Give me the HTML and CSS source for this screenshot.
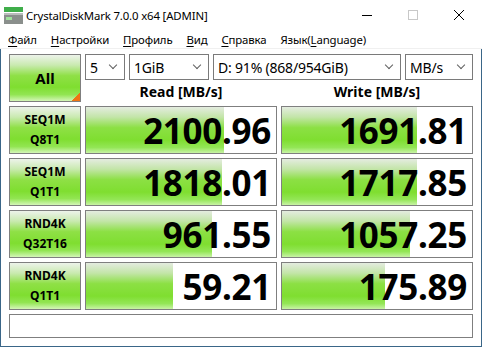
FILE: index.html
```html
<!DOCTYPE html>
<html lang="ru">
<head>
  <meta charset="UTF-8">
  <title>CrystalDiskMark 7.0.0 x64 [ADMIN]</title>
  <link rel="stylesheet" href="styles.css">
</head>
<body>

  <div class="titlebar">
    <svg class="app-icon" width="19" height="17" viewBox="0 0 19 17">
      <rect x="0" y="0" width="19" height="5" fill="#3fae4a"/>
      <rect x="0" y="6" width="19" height="11" fill="#8a8f8c"/>
      <rect x="0" y="6" width="19" height="2" fill="#b9bdbb"/>
      <rect x="2" y="10" width="6" height="3" fill="#9fe39c"/>
    </svg>
    <span class="title">CrystalDiskMark 7.0.0 x64 [ADMIN]</span>
    <div class="caption">
      <span class="cap-btn">
        <svg width="10" height="10" viewBox="0 0 10 10"><path d="M0 5.5H10" stroke="#000" stroke-width="1"/></svg>
      </span>
      <span class="cap-btn">
        <svg width="10" height="10" viewBox="0 0 10 10"><rect x="0.5" y="0.5" width="9" height="9" fill="none" stroke="#c8c8c8" stroke-width="1"/></svg>
      </span>
      <span class="cap-btn">
        <svg width="10" height="10" viewBox="0 0 10 10"><path d="M0 0L10 10M10 0L0 10" stroke="#000" stroke-width="1"/></svg>
      </span>
    </div>
  </div>

  <div class="menubar">
    <span class="menu"><u>Ф</u>айл</span>
    <span class="menu"><u>Н</u>астройки</span>
    <span class="menu"><u>П</u>рофиль</span>
    <span class="menu"><u>В</u>ид</span>
    <span class="menu"><u>С</u>правка</span>
    <span class="menu">Язык(<u>L</u>anguage)</span>
  </div>

  <div class="client">
    <div class="board">
      <div class="btn all">All</div>

      <div class="top">
        <div class="selects">
          <div class="select s-count"><span>5</span><i class="chev"></i></div>
          <div class="select s-size"><span>1GiB</span><i class="chev"></i></div>
          <div class="select s-drive"><span>D: 91% (868/954GiB)</span><i class="chev"></i></div>
          <div class="select s-unit"><span>MB/s</span><i class="chev"></i></div>
        </div>
        <div class="heads">
          <div>Read [MB/s]</div>
          <div>Write [MB/s]</div>
        </div>
      </div>

      <div class="btn label">SEQ1M<br>Q8T1</div>
      <div class="meter"><div class="bar" style="width:72.5%"></div><span class="val">2100.96</span></div>
      <div class="meter"><div class="bar" style="width:70.8%"></div><span class="val">1691.81</span></div>

      <div class="btn label">SEQ1M<br>Q1T1</div>
      <div class="meter"><div class="bar" style="width:71.5%"></div><span class="val">1818.01</span></div>
      <div class="meter"><div class="bar" style="width:70.8%"></div><span class="val">1717.85</span></div>

      <div class="btn label">RND4K<br>Q32T16</div>
      <div class="meter"><div class="bar" style="width:66.5%"></div><span class="val">961.55</span></div>
      <div class="meter"><div class="bar" style="width:67.2%"></div><span class="val">1057.25</span></div>

      <div class="btn label">RND4K<br>Q1T1</div>
      <div class="meter"><div class="bar" style="width:46%"></div><span class="val">59.21</span></div>
      <div class="meter"><div class="bar" style="width:54%"></div><span class="val">175.89</span></div>

      <div class="status"></div>
    </div>
  </div>

</body>
</html>
```

FILE: styles.css
```css
body {
  margin: 0;
  width: 482px;
  height: 347px;
  background: #fff;
  font-family: "Noto Sans", "Open Sans", sans-serif;
  color: #000;
  overflow: hidden;
}

/* title bar */
.titlebar {
  height: 30px;
  display: flex;
  align-items: center;
  background: #fff;
}

.app-icon {
  margin: 0 3px 0 4px;
}

.title {
  font-size: 11.4px;
  letter-spacing: -0.15px;
}

.caption {
  margin-left: auto;
  display: flex;
}

.cap-btn {
  width: 46px;
  height: 30px;
  display: flex;
  align-items: center;
  justify-content: center;
}

/* menu */
.menubar {
  height: 18px;
  display: flex;
  align-items: center;
  padding-left: 1px;
  font-size: 11.4px;
  letter-spacing: -0.15px;
  border-bottom: 1px solid #f0f0f0;
}

.menu {
  padding: 0 7px;
}

.menu u {
  text-decoration-thickness: 1px;
  text-underline-offset: 2px;
}

/* client area */
.client {
  height: 298px;
  box-sizing: border-box;
  padding: 5px 8px 0;
  border: 1px solid #3a6688;
  border-top: none;
}

.board {
  display: grid;
  grid-template-columns: 72px 192px 192px;
  grid-auto-rows: 48px;
  gap: 4px;
}

.btn {
  box-sizing: border-box;
  border: 1px solid #7f7f7f;
  display: flex;
  align-items: center;
  justify-content: center;
  text-align: center;
  font-weight: bold;
  background: linear-gradient(to bottom, #edf3ea 0%, #c9eab0 22%, #8fe046 45%, #7fde30 70%, #92e552 86%, #d4f6b8 100%);
}

.all {
  font-size: 15px;
  background:
    linear-gradient(135deg, transparent 50%, #f07414 50%) right bottom / 8px 8px no-repeat,
    linear-gradient(to bottom, #edf3ea 0%, #c9eab0 22%, #8fe046 45%, #7fde30 70%, #92e552 86%, #d4f6b8 100%);
}

.label {
  font-size: 12px;
  line-height: 20px;
}

.top {
  grid-column: 2 / 4;
  display: flex;
  flex-direction: column;
}

.selects {
  display: flex;
  gap: 4px;
  height: 26px;
}

.select {
  box-sizing: border-box;
  border: 1px solid #7a7a7a;
  background: #fff;
  display: flex;
  align-items: center;
  padding: 0 8px 0 4px;
  font-size: 14px;
  letter-spacing: -0.2px;
}

.s-count { width: 40px; }
.s-size { width: 80px; }
.s-drive { width: 188px; }
.s-unit { width: 68px; }

.chev {
  margin-left: auto;
  width: 5px;
  height: 5px;
  border-right: 1px solid #606060;
  border-bottom: 1px solid #606060;
  transform: translateY(-2px) rotate(45deg);
}

.heads {
  flex: 1;
  display: grid;
  grid-template-columns: 192px 192px;
  gap: 4px;
  align-items: center;
  text-align: center;
  font-size: 14px;
  font-weight: bold;
}

.meter {
  box-sizing: border-box;
  border: 1px solid #7f7f7f;
  background: #fff;
  display: grid;
}

.bar,
.val {
  grid-area: 1 / 1;
}

.bar {
  height: 100%;
  background: linear-gradient(to bottom, #e4ece0 0%, #c3e5a8 22%, #8ce044 45%, #7fde30 72%, #93e656 88%, #c8f3a6 100%);
}

.val {
  justify-self: end;
  align-self: center;
  padding-right: 5px;
  font-size: 35px;
  font-weight: bold;
  letter-spacing: -0.3px;
  line-height: 1;
}

.status {
  grid-column: 1 / 4;
  height: 24px;
  box-sizing: border-box;
  border: 1px solid #7f7f7f;
  background: #fff;
}
```
